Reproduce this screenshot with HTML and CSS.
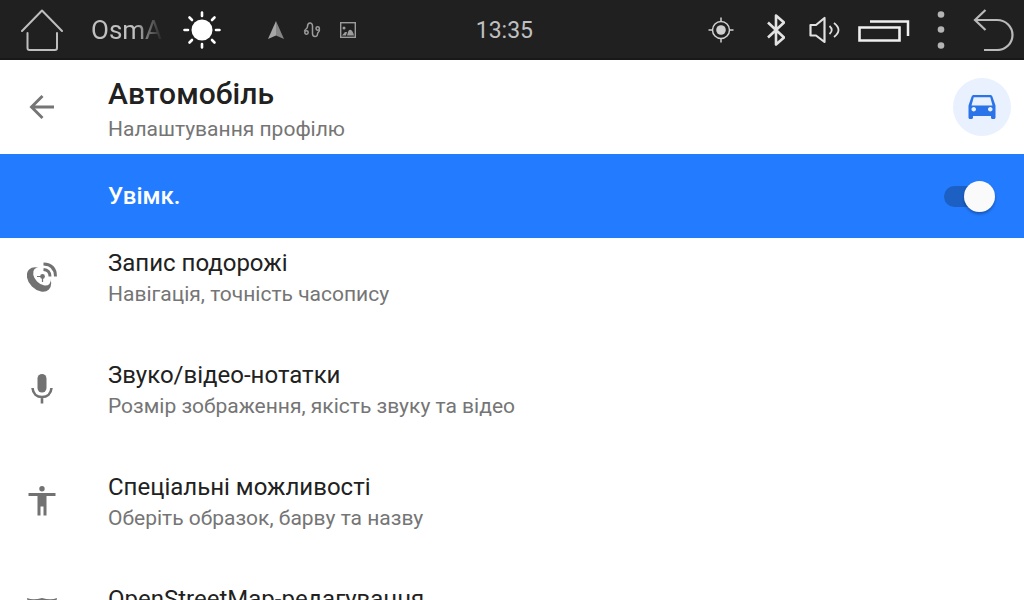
FILE: index.html
```html
<!doctype html>
<html lang="uk">
<head>
	<meta charset="UTF-8">
	<meta name="viewport" content="width=device-width, initial-scale=1">
	<title>Автомобіль</title>
	<link rel="stylesheet" href="styles.css">
</head>
<body>
	<div class="statusbar">
		<div class="status-left">
			<button class="bar-btn" type="button" aria-label="Home">
				<svg width="42" height="42" viewBox="0 0 42 42" fill="none" stroke="#bebebe" stroke-width="2" stroke-linecap="round" stroke-linejoin="round"><path d="M1 22L21 1.500L41 22M6.500 24V39Q6.500 41 8.500 41H34Q36 41 36 39V24"/></svg>
			</button>
			<span class="app-name">OsmAnd</span>
			<svg class="sun" width="38" height="38" viewBox="0 0 38 38" stroke="#fff" stroke-width="2.600" stroke-linecap="round"><circle cx="19" cy="19" r="10.500" fill="#fff" stroke="none"/><path d="M19 1.500V5M19 33V36.500M1.500 19H5M33 19H36.500M6.500 6.500L9 9M29 29L31.500 31.500M6.500 31.500L9 29M29 9L31.500 6.500"/></svg>
			<div class="notices">
				<svg width="18" height="20" viewBox="0 0 18 20"><path d="M9 1L1 19L9 15.500Z" fill="#a6a6a6"/><path d="M9 1L17 19L9 15.500Z" fill="#858585"/></svg>
				<svg width="18" height="20" viewBox="0 0 18 20" fill="none" stroke="#9c9c9c" stroke-width="1.500"><circle cx="3.500" cy="12.500" r="1.700"/><circle cx="14.700" cy="8.500" r="1.700"/><path d="M1.500 11.500C1.500 8.500 4.500 9.500 4.500 6.500C4.500 2 9.500 2 9.500 6V13.500C9.500 17.500 14.500 17.500 14.500 14C14.500 12 16.500 12.500 16.500 9.500"/></svg>
				<svg width="18" height="20" viewBox="0 0 18 20"><rect x="1.700" y="2.700" width="14.600" height="14.600" fill="none" stroke="#9c9c9c" stroke-width="1.400"/><circle cx="5" cy="8" r="1.500" fill="#9c9c9c"/><path d="M3 15.500L6 12L8 12L7 15.500ZM8 15.500L9 12Q10 9 12 10Q14 11 15 15.500Z" fill="#9c9c9c"/></svg>
			</div>
		</div>
		<time class="clock">13:35</time>
		<div class="status-right">
			<svg width="26" height="26" viewBox="0 0 26 26" fill="none" stroke="#cfcfcf" stroke-width="1.500"><circle cx="13" cy="13" r="8.500"/><circle cx="13" cy="13" r="4.800" fill="#cfcfcf" stroke="none"/><path d="M13 .5V5M13 21V25.500M.5 13H5M21 13H25.500"/></svg>
			<svg class="bluetooth" width="18" height="32" viewBox="0 0 18 32" fill="none" stroke="#e2e2e2" stroke-width="2.600" stroke-linejoin="round"><path d="M1 8.500L17 23.500L9 30.500V1.500L17 8.500L1 23.500"/></svg>
			<svg class="volume" width="32" height="28" viewBox="0 0 32 28" fill="none" stroke="#e0e0e0" stroke-width="2.200"><path d="M1.500 9H7L15.500 2V26L7 19.500H1.500Z" stroke-linejoin="round"/><path d="M20.500 10Q25 14 20.500 18M25 7Q34 14 25 21" stroke-width="1.800"/></svg>
			<button class="bar-btn recents" type="button" aria-label="Recent apps">
				<svg width="52" height="24" viewBox="0 0 52 24" fill="none" stroke="#efefef" stroke-width="2.600"><path d="M1.500 9.500H41.500V22.500H1.500Z"/><path d="M12 3.500H50V18" stroke-width="2.500"/></svg>
			</button>
			<button class="bar-btn more" type="button" aria-label="Menu">
				<svg width="8" height="38" viewBox="0 0 8 38" fill="#b4b4b4"><circle cx="4" cy="3.500" r="3.300"/><circle cx="4" cy="18.500" r="3.300"/><circle cx="4" cy="34.500" r="3.300"/></svg>
			</button>
			<button class="bar-btn back" type="button" aria-label="Back">
				<svg width="41" height="42" viewBox="0 0 41 42" fill="none" stroke="#bababa" stroke-width="2.200"><path d="M12.500 1L2 11L12.500 21M2 11H24C33 11 39.500 18 39.500 26C39.500 34 33 41 24 41H11"/></svg>
			</button>
		</div>
	</div>

	<header class="toolbar">
		<button class="icon-col nav-back" type="button" aria-label="Назад">
			<svg width="26" height="26" viewBox="0 0 26 26" fill="none" stroke="#757575" stroke-width="2.900"><path d="M25 13H3M13.500 2L2.500 13L13.500 24"/></svg>
		</button>
		<div class="toolbar-text">
			<h1>Автомобіль</h1>
			<p>Налаштування профілю</p>
		</div>
		<span class="profile">
			<svg width="36" height="36" viewBox="0 0 24 24" fill="#2a73e8"><path d="M18.920 5.010C18.720 4.420 18.160 4 17.500 4h-11c-.66 0-1.210.42-1.420 1.010L3 11v8c0 .55.45 1 1 1h1c.55 0 1-.45 1-1v-1h12v1c0 .55.45 1 1 1h1c.55 0 1-.45 1-1v-8l-2.080-5.990zM6.500 15c-.83 0-1.500-.67-1.500-1.500S5.670 12 6.500 12s1.500.67 1.500 1.500S7.330 15 6.500 15zm11 0c-.83 0-1.500-.67-1.500-1.500s.67-1.500 1.500-1.500 1.500.67 1.500 1.500-.67 1.500-1.500 1.500zM5 11l1.500-5.500h11L19 11H5z"/></svg>
		</span>
	</header>

	<div class="enable">
		<label for="enabled">Увімк.</label>
		<input class="switch" type="checkbox" role="switch" id="enabled" checked>
	</div>

	<main class="list">
		<a class="item" href="#trip">
			<span class="icon-col">
				<svg width="30" height="32" viewBox="0 0 30 32">
					<ellipse cx="12" cy="17.500" rx="14" ry="10" transform="rotate(45 12 17.500)" fill="#727272"/>
					<ellipse cx="15" cy="14.500" rx="10.500" ry="7" transform="rotate(45 15 14.500)" fill="#fff"/>
					<circle cx="15.500" cy="14.500" r="2.400" fill="#727272"/>
					<path d="M10 14.500H15.500V20" fill="none" stroke="#727272" stroke-width="1.200"/>
					<path d="M16.500 7.500Q23 8 23 14.500M16.500 2Q28.500 2.500 28.500 14.500" fill="none" stroke="#727272" stroke-width="2.900"/>
				</svg>
			</span>
			<span class="item-text">
				<span class="item-title">Запис подорожі</span>
				<span class="item-sub">Навігація, точність часопису</span>
			</span>
		</a>
		<a class="item" href="#notes">
			<span class="icon-col">
				<svg width="22" height="32" viewBox="0 0 22 32"><rect x="6.500" y="0" width="9" height="18.500" rx="4.500" fill="#727272"/><path d="M1.500 14C2 20 6 23 11 23C16 23 20 20 20.500 14M11 23V29.500" fill="none" stroke="#727272" stroke-width="2.600"/></svg>
			</span>
			<span class="item-text">
				<span class="item-title">Звуко/відео-нотатки</span>
				<span class="item-sub">Розмір зображення, якість звуку та відео</span>
			</span>
		</a>
		<a class="item" href="#accessibility">
			<span class="icon-col">
				<svg width="28" height="32" viewBox="0 0 28 32" fill="#727272"><circle cx="14" cy="2.700" r="2.700"/><path d="M.5 7H27.500V10H18.500V29.500H15.500V20.500H12.500V29.500H9.500V10H.5Z"/></svg>
			</span>
			<span class="item-text">
				<span class="item-title">Спеціальні можливості</span>
				<span class="item-sub">Оберіть образок, барву та назву</span>
			</span>
		</a>
		<a class="item" href="#osm">
			<span class="icon-col">
				<svg width="30" height="32" viewBox="0 0 30 32" fill="#727272"><path d="M0 0Q6 2.500 15 0Q24 2.500 30 0L28 10Q32 20 26 26Q20 28 15 32Q10 28 4 26Q-2 20 2 10Z"/></svg>
			</span>
			<span class="item-text">
				<span class="item-title">OpenStreetMap-редагування</span>
			</span>
		</a>
	</main>
</body>
</html>
```

FILE: styles.css
```css
*{
	box-sizing: border-box;
}
body{
	margin: 0;
	height: 100vh;
	overflow: hidden;
	display: flex;
	flex-direction: column;
	background: #fff;
	color: #212121;
	font-family: Roboto, "Noto Sans", sans-serif;
}
button{
	padding: 0;
	border: 0;
	background: none;
	cursor: pointer;
}
svg{
	display: block;
	flex: none;
}

/* status bar */
.statusbar{
	flex: none;
	display: flex;
	align-items: center;
	height: 60px;
	padding: 0 10px 0 21px;
	background: #202020;
	box-shadow: inset 0 -2px #181818;
	color: #c0c0c0;
}
.status-left,
.status-right,
.notices{
	display: flex;
	align-items: center;
}
.status-left{
	flex: 0 0 46%;
}
.app-name{
	width: 72px;
	margin: 0 20px 0 28px;
	overflow: hidden;
	font-size: 26px;
	line-height: 32px;
	-webkit-mask-image: linear-gradient(to right, #000 60%, transparent);
	mask-image: linear-gradient(to right, #000 60%, transparent);
}
.notices{
	gap: 18px;
	margin-left: 46px;
}
.clock{
	margin-left: -2px;
	padding-top: 2px;
	font-size: 23px;
	line-height: 32px;
}
.status-right{
	margin-left: auto;
}
.bluetooth{
	margin-left: 33px;
}
.volume{
	margin-left: 24px;
}
.recents{
	margin-left: 17px;
}
.more{
	margin-left: 27px;
}
.back{
	margin-left: 28px;
}

/* profile header */
.toolbar{
	flex: none;
	display: flex;
	align-items: center;
	height: 94px;
	padding-right: 13px;
}
.icon-col{
	flex: none;
	display: flex;
	justify-content: center;
	align-items: center;
	width: 84px;
	margin-right: 24px;
}
.nav-back{
	height: 58px;
}
.toolbar-text{
	flex: 1;
	padding-top: 4px;
}
.toolbar h1{
	margin: 0;
	font-size: 30px;
	font-weight: 500;
	line-height: 40px;
}
.toolbar p{
	margin: 0;
	color: #757575;
	font-size: 21px;
	line-height: 30px;
}
.profile{
	display: flex;
	justify-content: center;
	align-items: center;
	width: 58px;
	height: 58px;
	border-radius: 50%;
	background: #e8f1fd;
}

/* on/off row */
.enable{
	flex: none;
	display: flex;
	align-items: center;
	justify-content: space-between;
	height: 84px;
	padding: 0 34px 0 108px;
	background: #237bff;
	color: #fff;
	font-size: 24px;
	font-weight: 500;
	line-height: 32px;
}
.switch{
	appearance: none;
	position: relative;
	width: 46px;
	height: 21px;
	margin: 0;
	border-radius: 11px;
	background: #1c60c4;
	cursor: pointer;
}
.switch::before{
	content: "";
	position: absolute;
	top: -5px;
	left: -5px;
	width: 31px;
	height: 31px;
	border-radius: 50%;
	background: #fafafa;
	box-shadow: 0 2px 3px rgba(0, 0, 0, .3);
}
.switch:checked::before{
	left: 20px;
}

/* settings list */
.list{
	flex: 1;
	display: flex;
	flex-direction: column;
	gap: 50px;
	min-height: 0;
	padding-top: 9px;
	overflow: hidden;
}
.item{
	flex: none;
	display: flex;
	align-items: center;
	min-height: 62px;
	color: inherit;
	text-decoration: none;
}
.item-text{
	align-self: flex-start;
}
.item-title,
.item-sub{
	display: block;
}
.item-title{
	font-size: 24px;
	line-height: 32px;
}
.item-sub{
	color: #757575;
	font-size: 21px;
	line-height: 30px;
}
```
